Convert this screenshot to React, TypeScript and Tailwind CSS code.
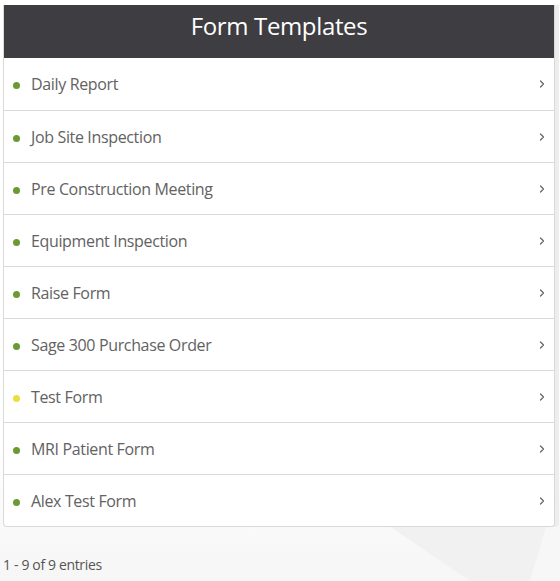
import { ChevronRight } from "lucide-react";

type Template = {
  name: string;
  status: "active" | "draft";
};

const templates: Template[] = [
  { name: "Daily Report", status: "active" },
  { name: "Job Site Inspection", status: "active" },
  { name: "Pre Construction Meeting", status: "active" },
  { name: "Equipment Inspection", status: "active" },
  { name: "Raise Form", status: "active" },
  { name: "Sage 300 Purchase Order", status: "active" },
  { name: "Test Form", status: "draft" },
  { name: "MRI Patient Form", status: "active" },
  { name: "Alex Test Form", status: "active" },
];

const App = () => {
  return (
    <div className="relative h-[581px] w-[560px] overflow-hidden bg-white font-['Open_Sans',sans-serif] tracking-[-0.022em]">
      {/* faint background shapes */}
      <svg className="absolute inset-0 h-full w-full" viewBox="0 0 560 581" preserveAspectRatio="none">
        <defs>
          <linearGradient id="fade" x1="0" y1="0" x2="0" y2="1">
            <stop offset="0.75" stopColor="#ffffff" />
            <stop offset="1" stopColor="#f6f6f6" />
          </linearGradient>
        </defs>
        <rect width="560" height="581" fill="url(#fade)" />
        <polygon points="380,520 560,520 560,581 470,581" fill="#f1f1f1" />
        <polygon points="548,520 560,520 560,581 530,581" fill="#f7f7f7" />
      </svg>

      <div className="relative pl-[3px] pr-[5px] pt-[5px]">
        <div className="overflow-hidden rounded-b-[4px] border-b border-r border-l border-[#d9d9d9] bg-white shadow-[4px_0_0_#ededed]">
          <div className="flex h-[53px] items-center justify-center bg-[#3e3d42] pb-[12px] text-[24px] text-white">
            Form Templates
          </div>
          <ul>
            {templates.map((t, i) => (
              <li
                key={t.name}
                className={`flex h-[52px] items-center pl-[9px] pr-[6px] ${i > 0 ? "border-t border-[#dadada]" : ""}`}
              >
                <span
                  className={`mt-[3px] h-[7px] w-[7px] rounded-full ${t.status === "active" ? "bg-[#6b9a35]" : "bg-[#eedd3f]"}`}
                />
                <span className="ml-[11px] flex-1 text-[16px] text-[#626262]">{t.name}</span>
                <ChevronRight className="h-[12px] w-[12px] text-[#666]" strokeWidth={2.5} />
              </li>
            ))}
          </ul>
        </div>
      </div>

      <div className="relative mt-[27px] pl-[3px] text-[14px] text-[#555]">1 - 9 of 9 entries</div>
    </div>
  );
};

export default App;
